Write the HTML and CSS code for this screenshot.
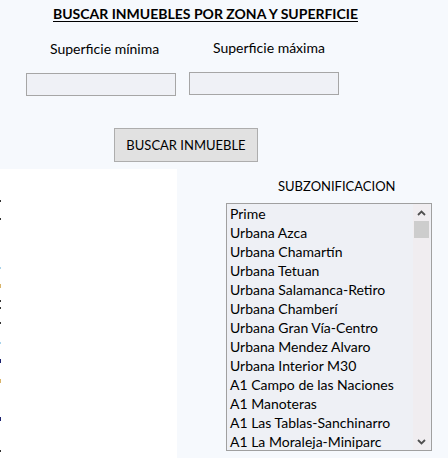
FILE: index.html
```html
<!DOCTYPE html>
<html lang="es">
<head>
<meta charset="utf-8">
<title>Buscar inmuebles</title>
<link rel="stylesheet" href="styles.css">
</head>
<body>
<div class="page">
  <section class="form">
    <h1 class="title">BUSCAR INMUEBLES POR ZONA Y SUPERFICIE</h1>
    <div class="fields">
      <div class="field field-min">
        <span class="label">Superficie mínima</span>
        <div class="input"></div>
      </div>
      <div class="field field-max">
        <span class="label">Superficie máxima</span>
        <div class="input"></div>
      </div>
    </div>
    <div class="btn-row"><div class="button">BUSCAR INMUEBLE</div></div>
  </section>
  <section class="bottom">
    <div class="panel">
      <div class="edge">
        <i class="d k t1"></i><i class="d k t2"></i><i class="d b t3"></i><i class="d o t4"></i>
        <i class="d k t5"></i><i class="d k t6"></i><i class="d k t7"></i><i class="d b t8"></i>
        <i class="d n t9"></i><i class="d o t10"></i><i class="d n t11"></i><i class="d k t12"></i>
      </div>
    </div>
    <div class="sub">
      <div class="sub-title">SUBZONIFICACION</div>
      <div class="listbox">
        <ul class="items">
          <li>Prime</li>
          <li>Urbana Azca</li>
          <li>Urbana Chamartín</li>
          <li>Urbana Tetuan</li>
          <li>Urbana Salamanca-Retiro</li>
          <li>Urbana Chamberí</li>
          <li>Urbana Gran Vía-Centro</li>
          <li>Urbana Mendez Alvaro</li>
          <li>Urbana Interior M30</li>
          <li>A1 Campo de las Naciones</li>
          <li>A1 Manoteras</li>
          <li>A1 Las Tablas-Sanchinarro</li>
          <li>A1 La Moraleja-Miniparc</li>
        </ul>
        <div class="scrollbar">
          <div class="arrow">
            <svg width="9" height="6" viewBox="0 0 9 6"><path d="M1 5 L4.5 1.5 L8 5" fill="none" stroke="#505050" stroke-width="1.8"/></svg>
          </div>
          <div class="thumb"></div>
          <div class="track"></div>
          <div class="arrow">
            <svg width="9" height="6" viewBox="0 0 9 6"><path d="M1 1 L4.5 4.5 L8 1" fill="none" stroke="#505050" stroke-width="1.8"/></svg>
          </div>
        </div>
      </div>
    </div>
  </section>
</div>
</body>
</html>
```
FILE: styles.css
```css
* { box-sizing: border-box; }
html, body { margin: 0; padding: 0; }
body {
  background: #f6f9fd;
  font-family: Lato, "Open Sans", sans-serif;
  color: #000;
  width: 448px;
  height: 458px;
  overflow: hidden;
}
.page { display: flex; flex-direction: column; }
.form { height: 169px; }
.title {
  margin: 0;
  padding: 5px 0 0 53px;
  font-size: 14px;
  font-weight: 700;
  line-height: 17px;
  text-decoration: underline;
  text-underline-offset: 2px;
  color: #000;
  white-space: nowrap;
}
.fields { display: flex; margin-top: 18px; }
.field { display: flex; flex-direction: column; width: 150px; }
.field-min { margin-left: 26px; }
.field-max { margin-left: 13px; margin-top: -1px; }
.label { font-size: 14px; line-height: 18px; white-space: nowrap; padding-left: 24px; }
.input {
  margin-top: 15px;
  width: 150px;
  height: 23px;
  background: #eff1f6;
  border: 1px solid #a6a6a6;
}
.btn-row { padding-left: 114px; margin-top: 32px; }
.button {
  width: 144px;
  height: 34px;
  background: #e1e1e1;
  border: 1px solid #adadad;
  display: flex;
  align-items: center;
  justify-content: center;
  font-size: 13px;
}
.bottom { display: flex; height: 289px; }
.panel {
  width: 177px;
  background: #ffffff;
  position: relative;
}
.edge { position: absolute; left: 0; top: 0; width: 1px; height: 100%; }
.d { position: absolute; left: 0; width: 1px; height: 2px; display: block; }
.k { background: #333; }
.b { background: #a9d3ea; }
.o { background: #d9b46a; height: 4px; }
.n { background: #1c2370; height: 4px; }
.t1 { top: 31px; } .t2 { top: 49px; } .t3 { top: 98px; } .t4 { top: 115px; }
.t5 { top: 131px; } .t6 { top: 138px; } .t7 { top: 153px; } .t8 { top: 173px; }
.t9 { top: 190px; } .t10 { top: 210px; } .t11 { top: 248px; } .t12 { top: 281px; }
.sub { display: flex; flex-direction: column; padding-left: 49px; }
.sub-title {
  margin-top: 9px;
  padding-left: 52px;
  font-size: 13px;
  line-height: 16px;
  white-space: nowrap;
}
.listbox {
  margin-top: 9px;
  width: 206px;
  height: 248px;
  border: 1px solid #a0a0a0;
  background: #eef0f5;
  display: flex;
}
.items {
  flex: 1;
  list-style: none;
  margin: 0;
  padding: 0 0 0 3px;
  font-size: 14px;
  line-height: 19px;
  overflow: hidden;
}
.items li { white-space: nowrap; }
.scrollbar {
  width: 17px;
  margin: 0 1px 0 0;
  background: #f0edf0;
  display: flex;
  flex-direction: column;
  align-items: center;
}
.arrow { height: 17px; width: 17px; display: flex; align-items: center; justify-content: center; }
.thumb { width: 15px; height: 17px; background: #cdcdcd; }
.track { flex: 1; }
```
